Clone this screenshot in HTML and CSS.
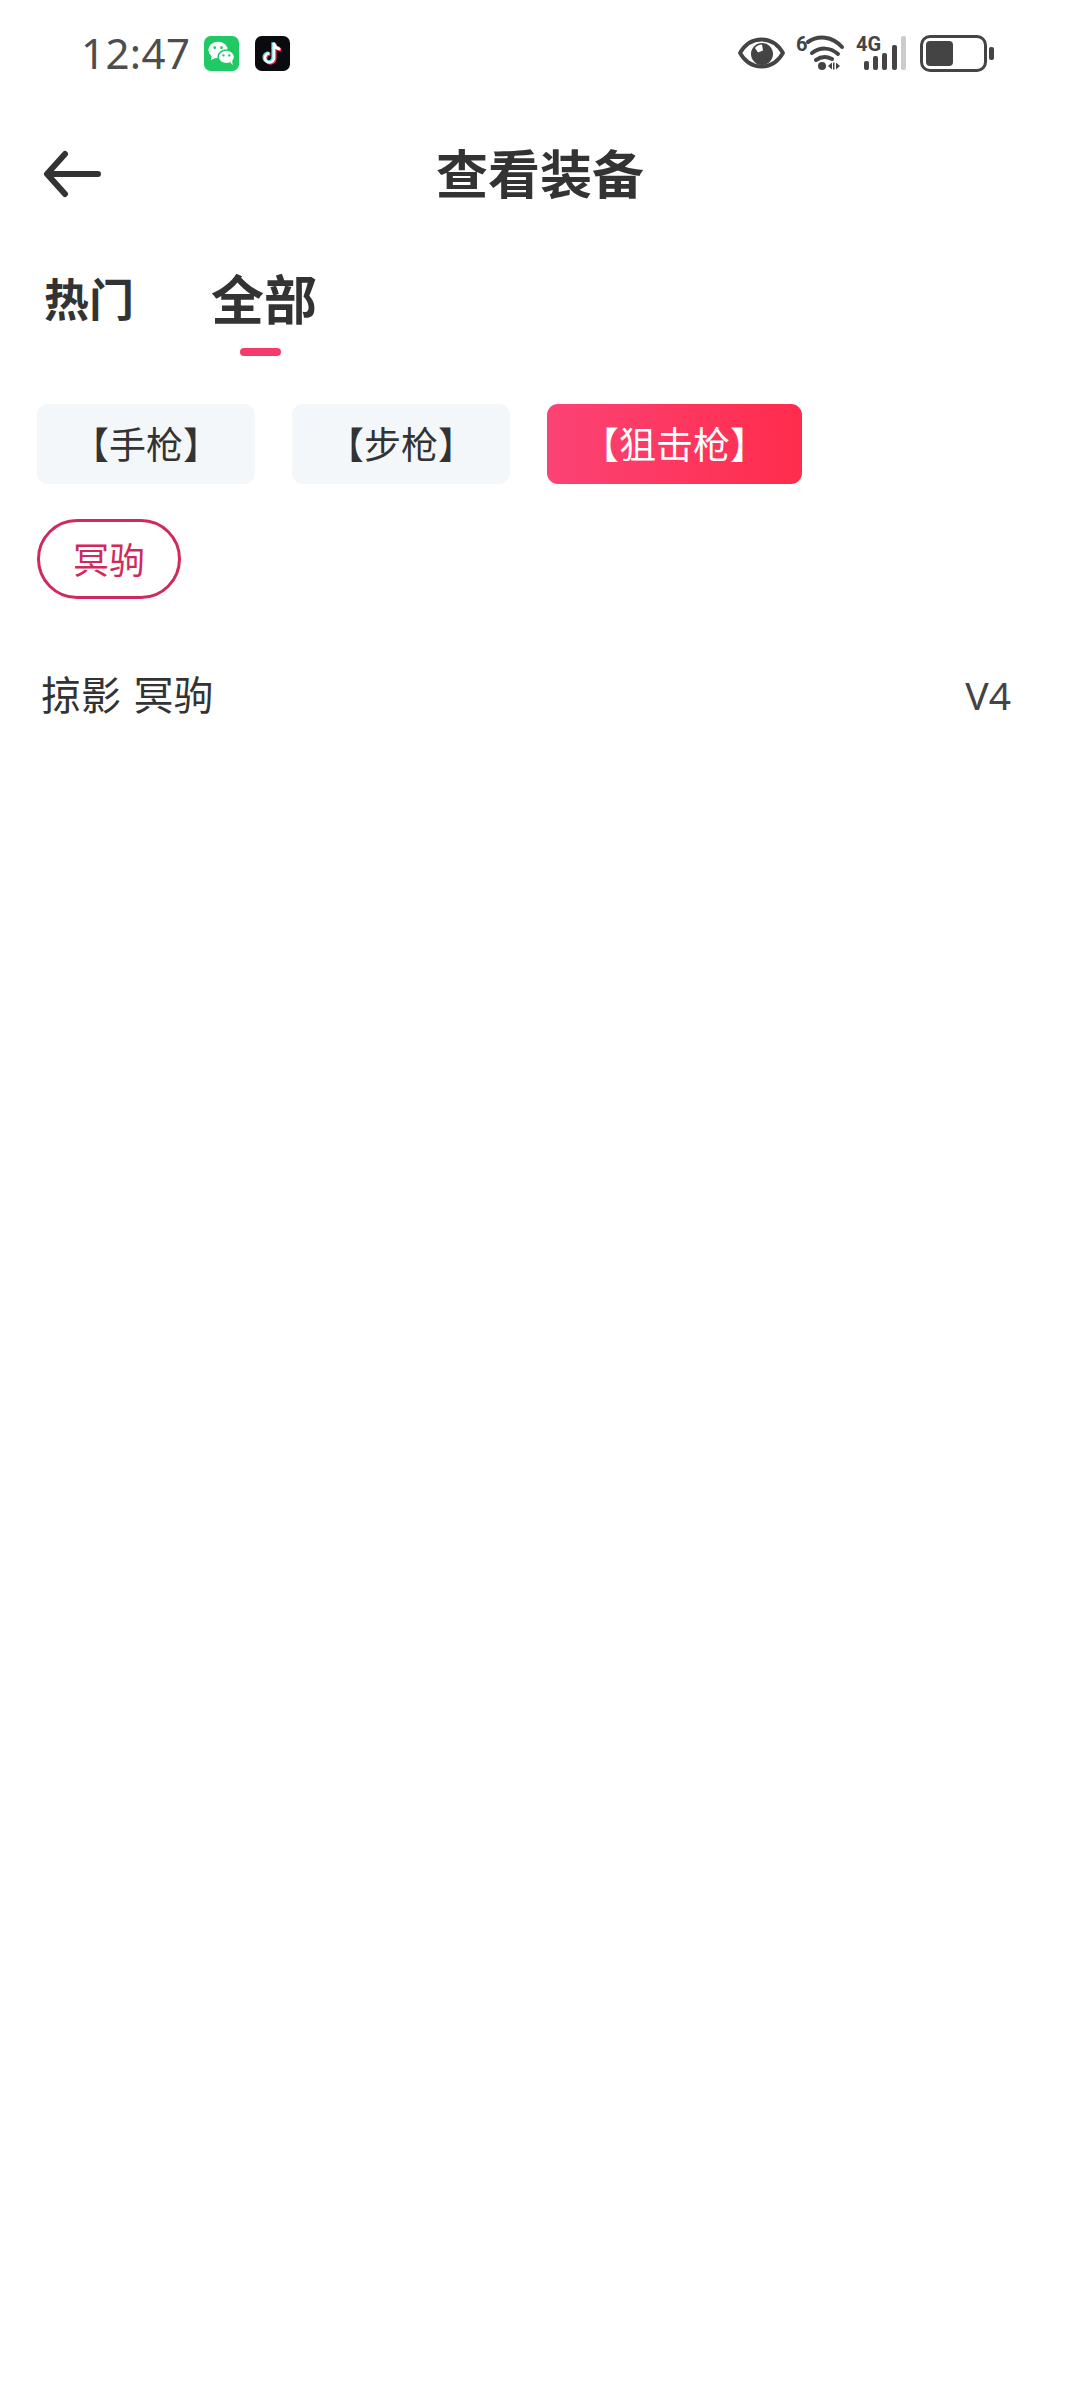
FILE: index.html
```html
<!DOCTYPE html>
<html lang="zh-CN">
  <head>
    <meta charset="UTF-8" />
    <meta name="viewport" content="width=device-width, initial-scale=1.0" />
    <title>查看装备</title>
    <link rel="stylesheet" href="styles.css">
  </head>
  <body>
    <div class="status-bar">
      <div class="status-left">
        <span class="time">12:47</span>
        <svg class="app-icon" viewBox="0 0 36 36">
          <rect width="36" height="36" rx="7" fill="#1fc964" />
          <ellipse cx="14.5" cy="14.5" rx="10" ry="8.5" fill="#fff" />
          <path d="M8 20l-1 5 6-3z" fill="#fff" />
          <ellipse cx="23" cy="21.5" rx="8.5" ry="7" fill="#fff" stroke="#1fc964" stroke-width="1.5" />
          <path d="M27 27l2.5 3-.5-5z" fill="#fff" />
          <circle cx="11" cy="12" r="1.4" fill="#1fc964" />
          <circle cx="18" cy="12" r="1.4" fill="#1fc964" />
          <circle cx="20" cy="20" r="1.2" fill="#1fc964" />
          <circle cx="26" cy="20" r="1.2" fill="#1fc964" />
        </svg>
        <svg class="app-icon" viewBox="0 0 36 36">
          <rect width="36" height="36" rx="7" fill="#0a0a0f" />
          <path d="M19.5 7v15.5a4.6 4.6 0 1 1-4.6-4.6M19.5 7c.4 3.6 2.8 6 6.5 6.4" fill="none" stroke="#e8315a" stroke-width="3.4" transform="translate(1 .8)" />
          <path d="M19.5 7v15.5a4.6 4.6 0 1 1-4.6-4.6M19.5 7c.4 3.6 2.8 6 6.5 6.4" fill="none" stroke="#52d8df" stroke-width="3.4" transform="translate(-1 -.6)" />
          <path d="M19.5 7v15.5a4.6 4.6 0 1 1-4.6-4.6M19.5 7c.4 3.6 2.8 6 6.5 6.4" fill="none" stroke="#fff" stroke-width="2.8" />
        </svg>
      </div>
      <div class="status-right">
        <svg width="47" height="32" viewBox="0 0 47 32">
          <path d="M2 16C7.500 6.500 14.500 2.500 23.500 2.500S39.500 6.500 45 16C39.500 25.500 32.500 29.500 23.500 29.500S7.500 25.500 2 16z" fill="none" stroke="#444" stroke-width="3.8" stroke-linejoin="round" />
          <circle cx="24" cy="17" r="11" fill="#444" />
          <path d="M17 11a9 9 0 0 1 7-3.500l1 6-5 2z" fill="#fff" />
        </svg>
        <svg class="net-icon" width="49" height="36" viewBox="0 0 49 36">
          <text x="0" y="16" class="net-label">6</text>
          <path d="M12 7C22 0 36 1 46 12" fill="none" stroke="#444" stroke-width="4" stroke-linecap="round" />
          <path d="M16 18c8-6 18-6 26 1" fill="none" stroke="#444" stroke-width="4" stroke-linecap="round" />
          <path d="M20 25c5-3.500 11-3.500 16-1" fill="none" stroke="#444" stroke-width="4" stroke-linecap="round" />
          <circle cx="26" cy="31" r="4" fill="#444" />
          <path d="M32 31l4-3.500v7zM37 27.500h1.500v7H37zM40 27.500l4 3.500-4 3.500z" fill="#444" />
        </svg>
        <svg class="net-icon" width="52" height="36" viewBox="0 0 52 36">
          <text x="0" y="16" class="net-label">4G</text>
          <rect x="8" y="26" width="5" height="9" rx="2" fill="#444" />
          <rect x="17" y="21" width="5" height="14" rx="2" fill="#444" />
          <rect x="26" y="18" width="5" height="17" rx="2" fill="#444" />
          <rect x="36" y="10" width="5" height="25" rx="2" fill="#444" />
          <rect x="45" y="1" width="5" height="34" rx="2" fill="#ccc" />
        </svg>
        <div class="battery">
          <div class="battery-body"><div class="battery-level"></div></div>
          <div class="battery-cap"></div>
        </div>
      </div>
    </div>

    <div class="top-bar">
      <svg class="back" width="60" height="50" viewBox="0 0 60 50">
        <path d="M22 5L4 25l18 20M6 25h49" fill="none" stroke="#333" stroke-width="6" stroke-linecap="round" stroke-linejoin="round" />
      </svg>
      <h1 class="page-title">查看装备</h1>
    </div>

    <div class="tabs">
      <div class="tab">热门</div>
      <div class="tab tab-active">全部</div>
    </div>

    <div class="chips">
      <div class="chip">【手枪】</div>
      <div class="chip">【步枪】</div>
      <div class="chip chip-active">【狙击枪】</div>
    </div>

    <div class="sub-chips">
      <div class="pill">冥驹</div>
    </div>

    <div class="item-row">
      <span class="item-name">掠影 冥驹</span>
      <span class="item-level">V4</span>
    </div>
  </body>
</html>
```

FILE: styles.css
```css
body {
  margin: 0;
  width: 1080px;
  height: 2390px;
  overflow: hidden;
  background-color: #fff;
  color: #333;
  font-family: 'Noto Sans', 'Noto Sans CJK SC', sans-serif;
}

.status-bar {
  height: 106px;
  padding: 0 86px 0 81px;
  display: flex;
  justify-content: space-between;
  align-items: center;
  box-sizing: border-box;
}

.status-left {
  display: flex;
  align-items: center;
  gap: 14px;
}

.time {
  font-size: 42px;
  color: #4d4d4d;
  line-height: 1;
  letter-spacing: 0.4px;
}

.app-icon {
  width: 35px;
  height: 35px;
}

.app-icon + .app-icon {
  margin-left: 2px;
}

.status-right {
  display: flex;
  align-items: center;
  gap: 11px;
}

.net-icon {
  overflow: visible;
}

.net-label {
  font-family: 'Roboto', sans-serif;
  font-size: 20px;
  font-weight: 700;
  fill: #444;
}

.battery {
  display: flex;
  align-items: center;
  gap: 2px;
  margin-left: 1px;
}

.battery-body {
  width: 67px;
  height: 37px;
  padding: 3px;
  border: 3px solid #444;
  border-radius: 10px;
  box-sizing: border-box;
}

.battery-level {
  width: 27px;
  height: 100%;
  background-color: #444;
  border-radius: 4px;
}

.battery-cap {
  width: 5px;
  height: 13px;
  background-color: #444;
  border-radius: 2px;
}

.top-bar {
  height: 90px;
  padding-left: 43px;
  margin-top: 23px;
  position: relative;
  display: flex;
  align-items: center;
}

.page-title {
  position: absolute;
  left: 0;
  right: 0;
  margin: 0;
  text-align: center;
  font-size: 52px;
  font-weight: 700;
  line-height: 1;
}

.tabs {
  margin-top: 30px;
  padding-left: 44px;
  display: flex;
  align-items: center;
  gap: 77px;
  height: 100px;
  font-weight: 700;
  font-size: 45px;
}

.tab {
  position: relative;
  line-height: 1;
}

.tab-active {
  font-size: 53px;
}

.tab-active::after {
  content: '';
  position: absolute;
  left: 29px;
  bottom: -30px;
  width: 41px;
  height: 8px;
  border-radius: 4px;
  background-color: #f43b6a;
}

.chips {
  margin-top: 55px;
  padding-left: 37px;
  display: flex;
  gap: 37px;
}

.chip {
  width: 218px;
  height: 80px;
  padding-bottom: 2px;
  display: flex;
  justify-content: center;
  align-items: center;
  box-sizing: border-box;
  background-color: #f4f7f9;
  border-radius: 11px;
  font-size: 37px;
  color: #333;
}

.chip-active {
  width: 255px;
  color: #fff;
  background: linear-gradient(90deg, #fb4375, #ff2c4c);
}

.sub-chips {
  margin-top: 35px;
  padding-left: 37px;
  display: flex;
}

.pill {
  width: 144px;
  height: 80px;
  padding-bottom: 2px;
  display: flex;
  justify-content: center;
  align-items: center;
  box-sizing: border-box;
  border: 3px solid #d02a5c;
  border-radius: 40px;
  font-size: 36px;
  color: #d02a5c;
}

.item-row {
  margin-top: 66px;
  padding: 0 69px 0 41px;
  display: flex;
  justify-content: space-between;
  align-items: center;
  font-size: 40px;
  line-height: 60px;
  color: #333;
}

.item-name {
  word-spacing: 2px;
}

.item-level {
  font-size: 39px;
  color: #444;
}
```
